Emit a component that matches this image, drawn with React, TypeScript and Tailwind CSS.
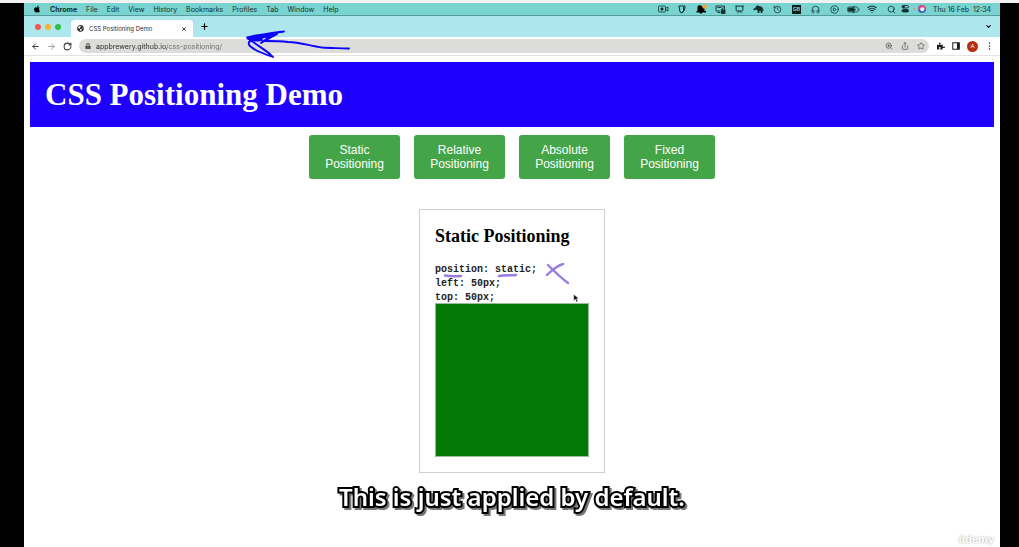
import type { ReactNode } from "react";
import {
  ArrowLeft,
  ArrowRight,
  ChevronDown,
  CirclePlay,
  Headphones,
  History,
  Plus,
  Presentation,
  RotateCw,
  Search,
  Share,
  Star,
  Wifi,
  X,
  ZoomIn,
} from "lucide-react";
import { FaApple, FaPuzzlePiece, FaLock, FaGlobeAmericas } from "react-icons/fa";

const menus = ["File", "Edit", "View", "History", "Bookmarks", "Profiles", "Tab", "Window", "Help"];

const positions = ["Static", "Relative", "Absolute", "Fixed"];

const statusIcons: { name: string; icon: ReactNode }[] = [
  {
    name: "Screen recording",
    icon: (
      <svg viewBox="0 0 22 16" className="h-2 w-[11px]" fill="none" stroke="currentColor" strokeWidth="1.6">
        <rect x="1" y="2" width="14" height="12" rx="2" />
        <path d="M15 7l5-3v8l-5-3" />
        <circle cx="8" cy="8" r="2.4" fill="currentColor" />
      </svg>
    ),
  },
  {
    name: "Cup",
    icon: (
      <svg viewBox="0 0 16 18" className="h-[9px] w-2" fill="none" stroke="currentColor" strokeWidth="2">
        <path d="M2 2h12l-1 9-5 5-4-2z" />
        <path d="M11 3v8l-3 5" />
      </svg>
    ),
  },
  {
    name: "Notifications",
    icon: (
      <svg viewBox="0 0 22 20" className="h-[10px] w-[11px]">
        <path d="M1 14h2V7c0-4 3-5 7-4l7 5v6h3v3h-7l-3 3-3-3H1z" fill="#000" />
        <circle cx="17" cy="5" r="4.5" fill="#f5a623" />
      </svg>
    ),
  },
  {
    name: "Secure display",
    icon: (
      <svg viewBox="0 0 22 18" className="h-[9px] w-[11px]" fill="none" stroke="currentColor" strokeWidth="1.8">
        <path d="M11 12H2V2h17v4M5 5h8M5 15h6" />
        <path d="M14 10V8c0-3 5-3 5 0v2" />
        <rect x="13" y="10" width="7" height="7" fill="currentColor" />
      </svg>
    ),
  },
  { name: "Presentation", icon: <Presentation className="size-[9px]" strokeWidth={2.6} /> },
  {
    name: "Elephant",
    icon: (
      <svg viewBox="0 0 24 20" className="h-[9px] w-[11px]" fill="currentColor">
        <path d="M0 9l5-3 2-4c3-2 6-1 8 1 4 0 6 2 7 6l2 4h-3v5h-4v-4h-3v4h-4v-5l-3-3-5 2z" />
      </svg>
    ),
  },
  { name: "Time Machine", icon: <History className="size-[9px]" strokeWidth={2} /> },
  {
    name: "Keyboard input",
    icon: (
      <span className="flex size-[9px] items-center justify-center bg-[#10201f] text-[5px] leading-none font-bold text-[#78d3d1]">
        GB
      </span>
    ),
  },
  { name: "Headphones", icon: <Headphones className="size-[9px]" strokeWidth={2} /> },
  { name: "Now playing", icon: <CirclePlay className="size-[9px]" strokeWidth={2} /> },
  {
    name: "Battery",
    icon: (
      <svg viewBox="0 0 26 14" className="h-[7px] w-[13px]" fill="none" stroke="currentColor" strokeWidth="1.4">
        <rect x="1" y="2" width="21" height="10" rx="3" />
        <path d="M24 5v4" />
        <path d="M3 4h9v6H3z" fill="currentColor" />
        <path d="M14 0l-5 8h4l-1 6 5-8h-4z" fill="currentColor" />
      </svg>
    ),
  },
  { name: "Wi-Fi", icon: <Wifi className="size-[10px]" strokeWidth={2.6} /> },
  { name: "Spotlight", icon: <Search className="size-[9px]" strokeWidth={2.2} /> },
];

function Menubar() {
  return (
    <div className="flex h-[13px] items-center border-b border-[#559b99] bg-[#78d3d1] px-[9px] font-['Inter',sans-serif] text-[7px] leading-none text-[#15302f]">
      <FaApple className="mr-[9px] size-2 text-black" />
      <nav className="flex items-center gap-[9px]" aria-label="Menu bar">
        <span className="font-bold">Chrome</span>
        {menus.map((menu) => (
          <span key={menu}>{menu}</span>
        ))}
      </nav>
      <div className="ml-auto flex items-center">
        {statusIcons.map(({ name, icon }) => (
          <span key={name} title={name} className="flex w-[19px] shrink-0 justify-center">
            {icon}
          </span>
        ))}
        <span title="Control Centre" className="flex w-4 items-center gap-[3px]">
          <svg viewBox="0 0 18 16" className="h-2 w-[9px]" fill="none" stroke="currentColor" strokeWidth="1.8">
            <rect x="2" y="1" width="13" height="5" rx="2.5" />
            <rect x="2" y="9" width="13" height="5" rx="2.5" fill="currentColor" />
            <circle cx="5" cy="3.5" r="2" fill="currentColor" />
          </svg>
          <span className="size-[2px] rounded-full bg-[#e79a3c]" />
        </span>
        <span title="Siri" className="mr-[7px] ml-[1px] flex w-2">
          <svg viewBox="0 0 16 16" className="size-2">
            <circle cx="8" cy="8" r="8" fill="#4b5fb5" />
            <path d="M8 0a8 8 0 0 1 8 8H8z" fill="#e9567b" />
            <path d="M0 8a8 8 0 0 1 8-8v8z" fill="#d84a8c" />
            <circle cx="8.500" cy="8.500" r="4" fill="#e8f4fb" />
          </svg>
        </span>
        <time className="whitespace-nowrap">Thu 16 Feb&nbsp; 12:34</time>
      </div>
    </div>
  );
}

function TabStrip() {
  return (
    <div className="flex h-[21px] items-end bg-[#ade6ed] pr-2 pl-[11px]">
      <div className="flex gap-1 self-center">
        <button aria-label="Close window" className="size-[6px] rounded-full bg-[#f4574f]" />
        <button aria-label="Minimise window" className="size-[6px] rounded-full bg-[#f5b32f]" />
        <button aria-label="Zoom window" className="size-[6px] rounded-full bg-[#29c13f]" />
      </div>
      <div className="ml-[10px] flex h-[17px] w-[122px] items-center rounded-t bg-white px-[6px] font-['Inter',sans-serif] text-[6px] text-[#2b2b2b]">
        <FaGlobeAmericas className="mr-[5px] size-[7px]" />
        <span className="whitespace-nowrap">CSS Positioning Demo</span>
        <button aria-label="Close tab" className="ml-auto">
          <X className="size-[6px]" strokeWidth={3.5} />
        </button>
      </div>
      <button aria-label="New tab" className="ml-[7px] self-center">
        <Plus className="size-[9px]" strokeWidth={3} />
      </button>
      <button aria-label="Search tabs" className="ml-auto self-center">
        <ChevronDown className="size-[7px]" strokeWidth={3.5} />
      </button>
    </div>
  );
}

function Toolbar() {
  return (
    <div className="relative flex h-[19px] items-center border-b border-[#e3e3e3] bg-white pr-[6px] pl-[7px] text-[#333]">
      <button aria-label="Back">
        <ArrowLeft className="size-[9px]" strokeWidth={2.6} />
      </button>
      <button aria-label="Forward" className="ml-[7px] text-[#999]">
        <ArrowRight className="size-[9px]" strokeWidth={2.6} />
      </button>
      <button aria-label="Reload" className="ml-[7px]">
        <RotateCw className="size-[9px]" strokeWidth={2.8} />
      </button>
      <div className="ml-[7px] flex h-[14px] min-w-0 flex-1 items-center rounded-full bg-[#dcdcda] pr-1 pl-[6px]">
        <FaLock className="mr-[5px] size-[6px] text-[#555]" />
        <input
          aria-label="Address"
          defaultValue="appbrewery.github.io/css-positioning/"
          className="h-[14px] min-w-0 flex-1 bg-[linear-gradient(90deg,#262626_71px,#6a6a6a_71px)] bg-clip-text font-['Inter',sans-serif] text-[7px] text-transparent outline-none"
        />
        <div className="flex items-center gap-2 text-[#555]">
          <button aria-label="Zoom">
            <ZoomIn className="size-2" strokeWidth={2.2} />
          </button>
          <button aria-label="Share">
            <Share className="size-2" strokeWidth={2.2} />
          </button>
          <button aria-label="Bookmark">
            <Star className="size-2" strokeWidth={2.2} />
          </button>
        </div>
      </div>
      <div className="ml-2 flex items-center gap-[7px] text-[#1d1d1d]">
        <button aria-label="Extensions">
          <FaPuzzlePiece className="size-2" />
        </button>
        <button aria-label="Side panel">
          <svg viewBox="0 0 16 16" className="size-2">
            <rect x="1.500" y="1.500" width="13" height="13" fill="none" stroke="currentColor" strokeWidth="2" />
            <path d="M10 2h5v12h-5z" fill="currentColor" />
          </svg>
        </button>
        <button
          aria-label="Account"
          className="flex size-[11px] items-center justify-center rounded-full bg-[#b42f0d] text-[6px] leading-none text-white"
        >
          A
        </button>
        <button aria-label="More options">
          <svg viewBox="0 0 10 16" className="h-2 w-[9px]" fill="currentColor">
            <circle cx="5" cy="2" r="1.500" />
            <circle cx="5" cy="8" r="1.500" />
            <circle cx="5" cy="14" r="1.500" />
          </svg>
        </button>
      </div>
      <svg
        viewBox="0 0 106 32"
        className="pointer-events-none absolute -top-2 left-[220px] z-10 h-8 w-[106px]"
        fill="none"
        stroke="#0a00ff"
        strokeWidth="1.800"
        strokeLinecap="round"
        strokeLinejoin="round"
      >
        <path d="M105 19.500C94 19 87 19 78 18.500C66 17 56 13 44 13C36 12 28 12 21 12" />
        <path d="M40 2.500C28 4 14 6 3 8.500C8 7 20 5 30 5C24 7 12 9 4 10C12 11 20 9 27 6C24 9 20 12 17 14C22 11 28 8 33 5M3 8.500C5 12 12 12 18 11M7 9L24 6" />
        <path d="M4 9L8 12C4 12 4 15 6 17C11 22 20 25 29 28C24 23 16 18 9 13C15 17 23 22 26 25" />
      </svg>
    </div>
  );
}

function DemoCard() {
  return (
    <section className="mx-auto mt-[30px] w-[186px] border border-[#cfcfcf] p-[15px]">
      <h2 className="text-[18px] leading-[22px] font-bold whitespace-nowrap text-black">Static Positioning</h2>
      <div className="relative mt-4 h-10">
        <pre className="font-['Liberation_Mono',monospace] text-[10px] leading-[14px] font-bold text-[#222]">
          {"position: static;\nleft: 50px;\ntop: 50px;"}
        </pre>
        <svg
          viewBox="0 0 150 42"
          className="pointer-events-none absolute top-0 left-0 h-[42px] w-[150px]"
          fill="none"
          stroke="#9a7be0"
          strokeWidth="2.400"
          strokeLinecap="round"
        >
          <path d="M10 12.500C15 13.500 20 13.500 26 13M64 13C70 12 76 12.500 81 12" />
          <path d="M113 2C118 7 126 15 133 20M128 1C121 3 116 8 112 12" />
        </svg>
        <svg viewBox="0 0 10 16" className="absolute top-[31px] left-[138px] h-[9px] w-[6px]">
          <path d="M1 1v11l3-3 2 5 2-1-2-5h4z" fill="#111" stroke="#fff" strokeWidth="0.500" />
        </svg>
      </div>
      <div className="aspect-square w-full border border-[#9abf9a] bg-[#047804]" />
    </section>
  );
}

export default function App() {
  return (
    <div className="flex min-h-screen flex-col bg-black pr-[19px] pl-6 font-['Liberation_Sans',sans-serif]">
      <div className="-mr-[19px] -ml-6 h-[3px] bg-[#f1f1f1]" />
      <div className="relative flex flex-1 flex-col bg-white">
        <Menubar />
        <TabStrip />
        <Toolbar />
        <main className="flex-1 px-[6px] pt-[6px] pb-[74px] font-['Liberation_Serif',serif]">
          <header className="bg-[#1e00ff] px-[15px] py-[14px]">
            <h1 className="text-[31px] leading-[37px] font-bold text-white">CSS Positioning Demo</h1>
          </header>
          <nav className="mt-2 flex justify-center gap-[14px]" aria-label="Positioning types">
            {positions.map((position) => (
              <button
                key={position}
                className="w-[91px] rounded-[3px] bg-[#43a547] px-[15px] py-2 font-['Liberation_Sans',sans-serif] text-[12px] leading-[14px] text-white"
              >
                {position} Positioning
              </button>
            ))}
          </nav>
          <DemoCard />
        </main>
        <p className="absolute inset-x-0 bottom-[33px] text-center font-['Noto_Sans',sans-serif] text-[24px] leading-[34px] font-semibold whitespace-nowrap text-white drop-shadow-[2px_2px_0_#777] [paint-order:stroke_fill] [-webkit-text-stroke:4px_black]">
          This is just applied by default.
        </p>
        <span className="absolute right-[6px] bottom-0 text-[11px] leading-4 font-bold text-white [text-shadow:0_0_2px_#999]">
          ûdemy
        </span>
      </div>
    </div>
  );
}
